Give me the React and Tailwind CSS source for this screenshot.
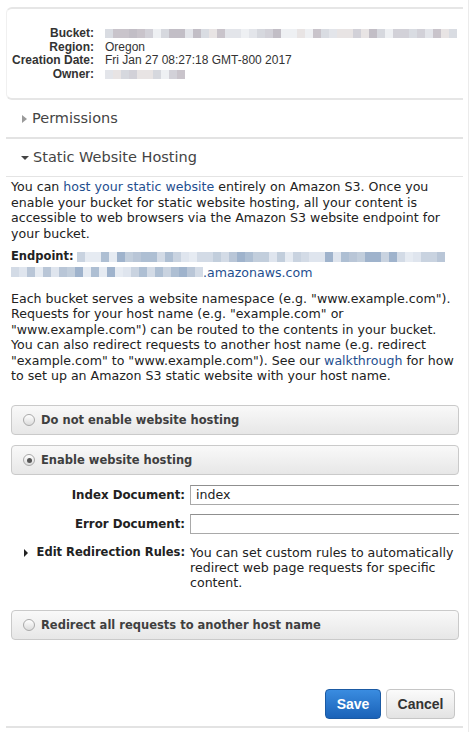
import React from "react";

const GRAY = [
  "bg-[#e3e5ea]",
  "bg-[#d2d1d8]",
  "bg-[#c9c4cb]",
  "bg-[#eef0f3]",
  "bg-[#d9dce2]",
  "bg-[#c2bec6]",
  "bg-[#e8e4e4]",
  "bg-[#d6d8de]",
];
const BLUE = [
  "bg-[#c9d3e0]",
  "bg-[#aebfd3]",
  "bg-[#dfe5ee]",
  "bg-[#b9c6d7]",
  "bg-[#d3dbe6]",
  "bg-[#9fb3cc]",
  "bg-[#e6ebf2]",
  "bg-[#c2cedc]",
];

function Mosaic({ count, palette, seed = 0, h = "h-[9px]" }) {
  const blocks = [];
  for (let i = 0; i < count; i++) {
    const idx = (i * 5 + seed * 3 + ((i * i + seed) % 7)) % palette.length;
    blocks.push(<span key={i} className={`inline-block w-[8px] ${h} ${palette[idx]}`} />);
  }
  return <span className="inline-flex align-middle">{blocks}</span>;
}

function Radio({ checked }) {
  return (
    <span className="w-[12px] h-[12px] rounded-full border border-[#a9a9a9] bg-gradient-to-b from-[#ffffff] to-[#dcdcdc] flex items-center justify-center shrink-0">
      {checked && <span className="w-[5px] h-[5px] rounded-full bg-[#555]" />}
    </span>
  );
}

function OptionBox({ checked, label }) {
  return (
    <div className="h-[30px] border border-[#cacaca] rounded-[4px] bg-gradient-to-b from-[#f9f9f9] to-[#e7e7e7] flex items-center pl-[11px] gap-[6px]">
      <Radio checked={checked} />
      <span className="font-bold text-[11.5px] text-[#3f3f3f]">{label}</span>
    </div>
  );
}

export default function App() {
  return (
    <div className="w-[470px] h-[732px] bg-white flex items-start overflow-hidden font-['DejaVu_Sans',sans-serif] text-[#222]">
      <div className="w-[463px] shrink-0 pl-[6px] pt-[7px]">
        {/* details box */}
        <div className="border-t-2 border-b-2 border-l border-t-[#e6e6e6] border-b-[#e6e6e6] border-l-[#f0f0f0] rounded-l-[6px] pt-[18px] pb-[17px] font-['Liberation_Sans',Arial,sans-serif] text-[12px] leading-[13.5px] text-[#333]">
          <div className="flex">
            <div className="w-[87px] text-right font-bold">Bucket:</div>
            <div className="ml-[11px] flex items-center">
              <Mosaic count={44} palette={GRAY} seed={1} />
            </div>
          </div>
          <div className="flex">
            <div className="w-[87px] text-right font-bold">Region:</div>
            <div className="ml-[11px]">Oregon</div>
          </div>
          <div className="flex">
            <div className="w-[87px] text-right font-bold">Creation Date:</div>
            <div className="ml-[11px]">Fri Jan 27 08:27:18 GMT-800 2017</div>
          </div>
          <div className="flex">
            <div className="w-[87px] text-right font-bold">Owner:</div>
            <div className="ml-[11px] flex items-center">
              <Mosaic count={10} palette={GRAY} seed={4} />
            </div>
          </div>
        </div>

        {/* permissions */}
        <div className="h-[39px] border-b-2 border-[#e3e3e3] flex items-center pl-[16px]">
          <span className="w-0 h-0 border-y-[4px] border-y-transparent border-l-[5px] border-l-[#9a9a9a]" />
          <span className="ml-[5px] text-[14.5px] text-[#444]">Permissions</span>
        </div>

        {/* static website hosting */}
        <div className="h-[38px] border-b border-[#e4e4e4] flex items-center pl-[15px]">
          <span className="w-0 h-0 border-x-[4px] border-x-transparent border-t-[4px] border-t-[#444]" />
          <span className="ml-[4px] text-[14.5px] text-[#444]">Static Website Hosting</span>
        </div>

        <div className="pl-[5px] pr-[4px]">
          <p className="mt-[2px] text-[12.6px] leading-[15.5px]">
            You can <span className="text-[#1f4f8f]">host your static website</span> entirely on Amazon S3. Once you
            enable your bucket for static website hosting, all your content is accessible to web browsers via the
            Amazon S3 website endpoint for your bucket.
          </p>
          <div className="mt-[8px] text-[12.6px] leading-[15.5px]">
            <div className="flex items-center h-[15.5px]">
              <span className="font-bold text-[11.5px]">Endpoint:</span>
              <span className="ml-[3px] flex">
                <Mosaic count={46} palette={BLUE} seed={2} h="h-[10px]" />
              </span>
            </div>
            <div className="flex items-center h-[15.5px]">
              <Mosaic count={24} palette={BLUE} seed={5} h="h-[10px]" />
              <span className="text-[#1f4f8f]">.amazonaws.com</span>
            </div>
          </div>
          <p className="mt-[11px] text-[12.6px] leading-[15.4px]">
            Each bucket serves a website namespace (e.g. "www.example.com"). Requests for your host name (e.g.
            "example.com" or "www.example.com") can be routed to the contents in your bucket. You can also redirect
            requests to another host name (e.g. redirect "example.com" to "www.example.com"). See our{" "}
            <span className="text-[#1f4f8f]">walkthrough</span> for how to set up an Amazon S3 static website with
            your host name.
          </p>

          <div className="mt-[22px]">
            <OptionBox label="Do not enable website hosting" />
          </div>
          <div className="mt-[10px]">
            <OptionBox checked label="Enable website hosting" />
          </div>

          <div className="mt-[10px] flex items-center overflow-hidden">
            <div className="w-[174px] shrink-0 text-right font-bold text-[11.8px]">Index Document:</div>
            <div className="ml-[5px] w-[290px] h-[20px] shrink-0 border border-[#a9a9a9] border-t-[#8f8f8f] bg-white flex items-center pl-[5px] text-[12.6px] text-[#222]">
              index
            </div>
          </div>
          <div className="mt-[9px] flex items-center overflow-hidden">
            <div className="w-[174px] shrink-0 text-right font-bold text-[11.8px]">Error Document:</div>
            <div className="ml-[5px] w-[290px] h-[20px] shrink-0 border border-[#a9a9a9] border-t-[#8f8f8f] bg-white" />
          </div>

          <div className="mt-[11px] flex text-[12.6px] leading-[15px]">
            <div className="w-[174px] shrink-0 flex items-center justify-end font-bold text-[11.5px] h-[15px] whitespace-nowrap">
              <span className="w-0 h-0 border-y-[4px] border-y-transparent border-l-[4px] border-l-[#222] mr-[9px]" />
              <span>Edit Redirection Rules:</span>
            </div>
            <div className="ml-[5px] flex-1">
              You can set custom rules to automatically redirect web page requests for specific content.
            </div>
          </div>

          <div className="mt-[20px]">
            <OptionBox label="Redirect all requests to another host name" />
          </div>

          <div className="mt-[49px] flex justify-end pr-[4px] gap-[5px] font-['Liberation_Sans',Arial,sans-serif] text-[14px] font-bold">
            <button className="w-[56px] h-[30px] rounded-[4px] border border-[#1b5aa3] bg-gradient-to-b from-[#3a8ce0] to-[#1a62b8] text-white">
              Save
            </button>
            <button className="w-[69px] h-[30px] rounded-[4px] border border-[#c6c6c6] bg-gradient-to-b from-[#fbfbfb] to-[#e3e3e3] text-[#333]">
              Cancel
            </button>
          </div>
        </div>
        <div className="mt-[7px] h-[2px] bg-[#e3e3e3]" />
      </div>
      <div className="w-[5px] shrink-0" />
      <div className="w-px h-full shrink-0 bg-[#ebebeb]" />
    </div>
  );
}
